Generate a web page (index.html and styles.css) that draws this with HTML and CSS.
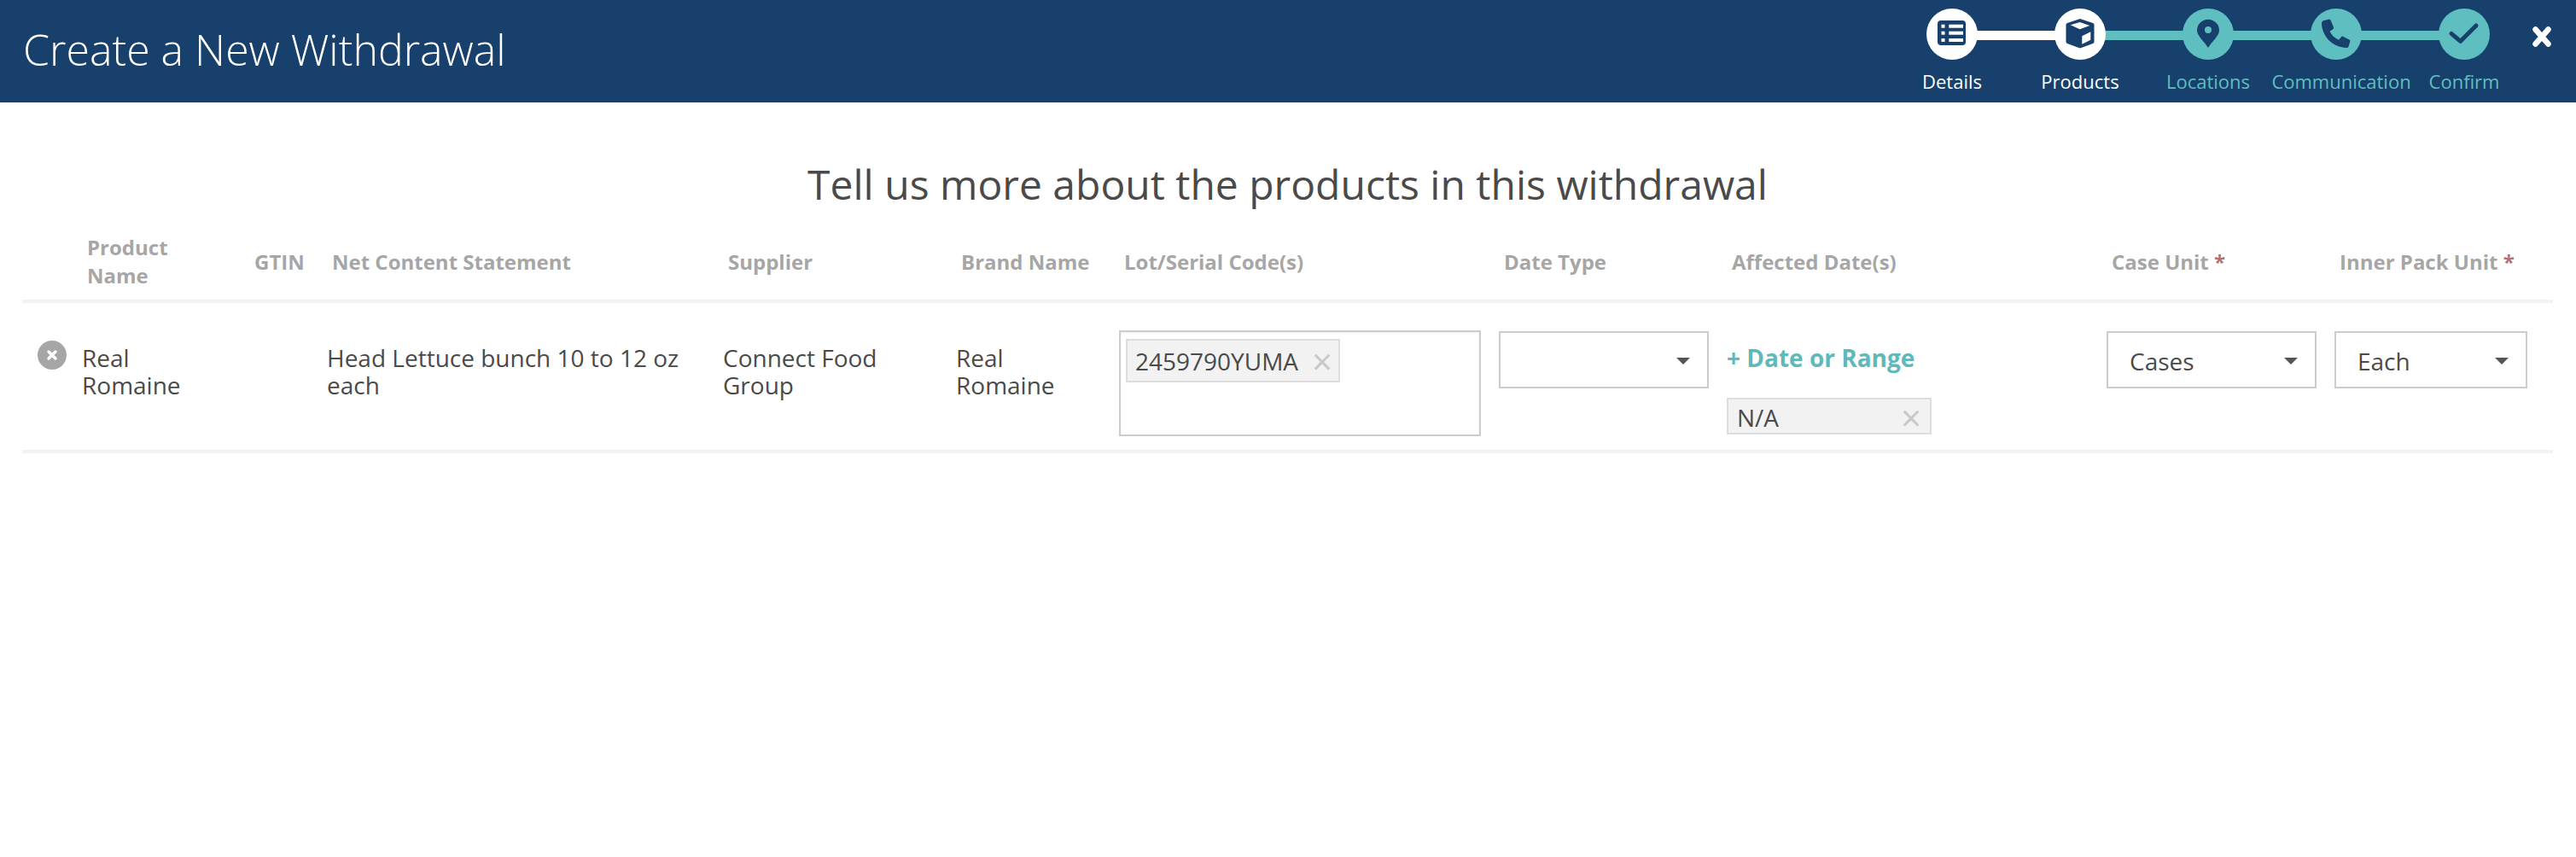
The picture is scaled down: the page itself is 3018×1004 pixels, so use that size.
FILE: index.html
```html
<!DOCTYPE html>
<html lang="en">
<head>
<meta charset="utf-8">
<title>Create a New Withdrawal</title>
<link rel="stylesheet" href="styles.css">
</head>
<body>
<header class="topbar">
  <div class="topbar-title">Create a New Withdrawal</div>
  <ol class="stepper">
    <li class="step step-done">
      <span class="step-dot">
        <svg viewBox="0 0 60 60" class="step-icon"><rect x="13" y="14" width="33" height="29" rx="4" fill="#17406d"/><g fill="#fff"><rect x="17.5" y="18.7" width="4" height="4"/><rect x="17.5" y="26.7" width="4" height="4"/><rect x="17.5" y="35" width="4" height="4"/><rect x="26.3" y="18.7" width="16.7" height="4"/><rect x="26.3" y="26.7" width="16.7" height="4"/><rect x="26.3" y="35" width="16.7" height="4"/></g></svg>
      </span>
      <span class="step-label">Details</span>
    </li>
    <li class="step step-current">
      <span class="step-dot">
        <svg viewBox="0 0 60 60" class="step-icon"><path d="M30 12L45 17Q46.500 17.500 46.500 19V39Q46.500 40.500 45 41L30 46.500L15 41Q13.500 40.500 13.500 39V19Q13.500 17.500 15 17Z" fill="#17406d"/><path d="M18.700 19.300L29.700 16L41.300 20L29.700 24.300Z M32.300 32.300L42.300 27.300V36.700L32.300 41.700Z" fill="#fff"/></svg>
      </span>
      <span class="step-label">Products</span>
    </li>
    <li class="step">
      <span class="step-dot">
        <svg viewBox="0 0 60 60" class="step-icon"><path fill-rule="evenodd" d="M30 46C26 39 17 32 17 25.700A13 13 0 0 1 43 25.700C43 32 34 39 30 46ZM30 21A4 4 0 1 0 30 29A4 4 0 1 0 30 21Z" fill="#17406d"/></svg>
      </span>
      <span class="step-label">Locations</span>
    </li>
    <li class="step">
      <span class="step-dot">
        <svg viewBox="0 0 60 60" class="step-icon"><path d="M15.700 14L21 12.700Q23 12.300 23.700 14L27 22Q27.500 23.300 26.500 24L22.500 26.700C24.500 31 28 34.500 33 36.700L36 33.200Q37 32.300 38 32.800L45.500 36.500Q46.800 37.200 46.300 38.700L44.500 44.500Q44 46 42.500 46C26 46 13 32 13 17Q13 14.700 15.700 14Z" fill="#17406d"/></svg>
      </span>
      <span class="step-label step-label-wide">Communication</span>
    </li>
    <li class="step">
      <span class="step-dot">
        <svg viewBox="0 0 60 60" class="step-icon"><path d="M15 29.300L25.700 38.300L44 20" fill="none" stroke="#17406d" stroke-width="5" stroke-linecap="round" stroke-linejoin="round"/></svg>
      </span>
      <span class="step-label">Confirm</span>
    </li>
  </ol>
  <svg class="close-icon" viewBox="0 0 22 24"><path d="M3.500 3.500L18.500 20.500M18.500 3.500L3.500 20.500" fill="none" stroke="#fff" stroke-width="6.500" stroke-linecap="round"/></svg>
</header>

<main class="content">
  <h1 class="page-heading">Tell us more about the products in this withdrawal</h1>

  <div class="grid-row head-row">
    <div class="head-cell head-name">Product Name</div>
    <div class="head-cell">GTIN</div>
    <div class="head-cell">Net Content Statement</div>
    <div class="head-cell">Supplier</div>
    <div class="head-cell">Brand Name</div>
    <div class="head-cell">Lot/Serial Code(s)</div>
    <div class="head-cell">Date Type</div>
    <div class="head-cell">Affected Date(s)</div>
    <div class="head-cell">Case Unit <span class="req">*</span></div>
    <div class="head-cell">Inner Pack Unit <span class="req">*</span></div>
  </div>

  <div class="grid-row body-row">
    <div class="cell cell-name">
      <svg class="remove-icon" viewBox="0 0 34 34"><circle cx="17" cy="17" r="17" fill="#a6a6a6"/><path d="M13 13L21 21M21 13L13 21" stroke="#fff" stroke-width="3.500" stroke-linecap="round"/></svg>
      <span class="name-text">Real Romaine</span>
    </div>
    <div class="cell"></div>
    <div class="cell cell-text">Head Lettuce bunch 10 to 12 oz each</div>
    <div class="cell cell-text">Connect Food Group</div>
    <div class="cell cell-text">Real Romaine</div>
    <div class="cell">
      <div class="lot-box">
        <span class="tag lot-tag">2459790YUMA<span class="tag-x">×</span></span>
      </div>
    </div>
    <div class="cell">
      <div class="select select-date"><span class="caret"></span></div>
    </div>
    <div class="cell cell-dates">
      <a class="add-date">+ Date or Range</a>
      <span class="tag date-tag">N/A<span class="tag-x">×</span></span>
    </div>
    <div class="cell">
      <div class="select select-case">Cases<span class="caret"></span></div>
    </div>
    <div class="cell">
      <div class="select select-inner">Each<span class="caret"></span></div>
    </div>
  </div>
</main>
</body>
</html>
```

FILE: styles.css
```css
* {
  box-sizing: border-box;
}

html,
body {
  margin: 0;
  padding: 0;
  background: #fff;
}

body {
  font-family: "Open Sans", "Liberation Sans", sans-serif;
  color: #4a4a4a;
  overflow: hidden;
}

.topbar {
  height: 120px;
  background: #17406d;
  display: flex;
  align-items: flex-start;
  padding-left: 27px;
}

.topbar-title {
  font-size: 50px;
  font-weight: 300;
  line-height: 66px;
  margin-top: 25px;
  color: #fff;
  flex: 1;
}

.stepper {
  list-style: none;
  margin: 10px 0 0;
  padding: 0;
  display: flex;
}

.step {
  position: relative;
  width: 150px;
  display: flex;
  flex-direction: column;
  align-items: center;
  color: #5fbfc0;
}

.step::before {
  content: "";
  position: absolute;
  left: 50%;
  top: 26px;
  width: 100%;
  height: 11px;
  background: #5fbfc0;
}

.step:last-child::before {
  display: none;
}

.step-done::before {
  background: #fff;
}

.step-done,
.step-current {
  color: #fff;
}

.step-dot {
  position: relative;
  width: 60px;
  height: 60px;
  border-radius: 50%;
  background: #5fbfc0;
  display: block;
}

.step-done .step-dot,
.step-current .step-dot {
  background: #fff;
}

.step-icon {
  display: block;
  width: 60px;
  height: 60px;
}

.step-label {
  font-size: 22px;
  line-height: 30px;
  margin-top: 10px;
  white-space: nowrap;
}

.step-label-wide {
  padding-left: 12px;
}

.close-icon {
  width: 22px;
  height: 24px;
  margin: 31px 29px 0 5px;
  flex: none;
}

.content {
  padding: 62px 27px 0 26px;
}

.page-heading {
  margin: 0 0 23px;
  font-size: 48px;
  font-weight: 400;
  line-height: 68px;
  text-align: center;
  color: #4a4a4a;
}

.grid-row {
  display: grid;
  grid-template-columns: 266px 91px 464px 273px 191px 445px 267px 445px 267px 256px;
}

.head-row {
  height: 82px;
  padding-bottom: 12px;
  border-bottom: 4px solid #f2f2f2;
  align-items: center;
}

.head-cell {
  padding-left: 6px;
  font-size: 24px;
  font-weight: 700;
  line-height: 33px;
  color: #a6a6a6;
  white-space: nowrap;
}

.head-name {
  padding-left: 76px;
  padding-right: 90px;
  white-space: normal;
}

.req {
  color: #b56f6f;
}

.body-row {
  height: 176px;
  padding-top: 32px;
  border-bottom: 4px solid #f2f2f2;
  font-size: 28px;
  line-height: 32px;
}

.cell-name {
  display: flex;
  align-items: flex-start;
  padding: 12px 0 0 18px;
  gap: 18px;
}

.remove-icon {
  width: 34px;
  height: 34px;
  flex: none;
}

.name-text {
  display: block;
  width: 130px;
  margin-top: 4px;
}

.cell-text {
  padding: 16px 24px 0 0;
}

.lot-box {
  width: 424px;
  height: 124px;
  border: 2px solid #ccc;
  padding: 8px 6px;
  box-shadow: inset 0 1px 2px rgba(0, 0, 0, 0.08);
}

.tag {
  display: flex;
  align-items: center;
  justify-content: space-between;
  background: #f2f2f2;
  border: 2px solid #ddd;
  font-size: 28px;
  line-height: 32px;
  color: #4a4a4a;
}

.lot-tag {
  width: 251px;
  height: 51px;
  padding: 0 7px 0 9px;
}

.date-tag {
  width: 240px;
  height: 43px;
  padding: 3px 10px 0;
}

.tag-x {
  font-size: 42px;
  line-height: 32px;
  color: #c8c8c8;
}

.select {
  position: relative;
  height: 67px;
  margin-top: 1px;
  border: 2px solid #ccc;
  padding-left: 25px;
  line-height: 67px;
}

.select-date {
  width: 246px;
}

.select-case {
  width: 246px;
}

.select-inner {
  width: 226px;
}

.caret {
  position: absolute;
  right: 20px;
  top: 29px;
  width: 0;
  height: 0;
  border-left: 8px solid transparent;
  border-right: 8px solid transparent;
  border-top: 8px solid #555;
}

.cell-dates {
  display: flex;
  flex-direction: column;
  align-items: flex-start;
}

.add-date {
  font-weight: 700;
  color: #5fb8b9;
  line-height: 32px;
  margin-top: 16px;
  margin-bottom: 31px;
}
```
